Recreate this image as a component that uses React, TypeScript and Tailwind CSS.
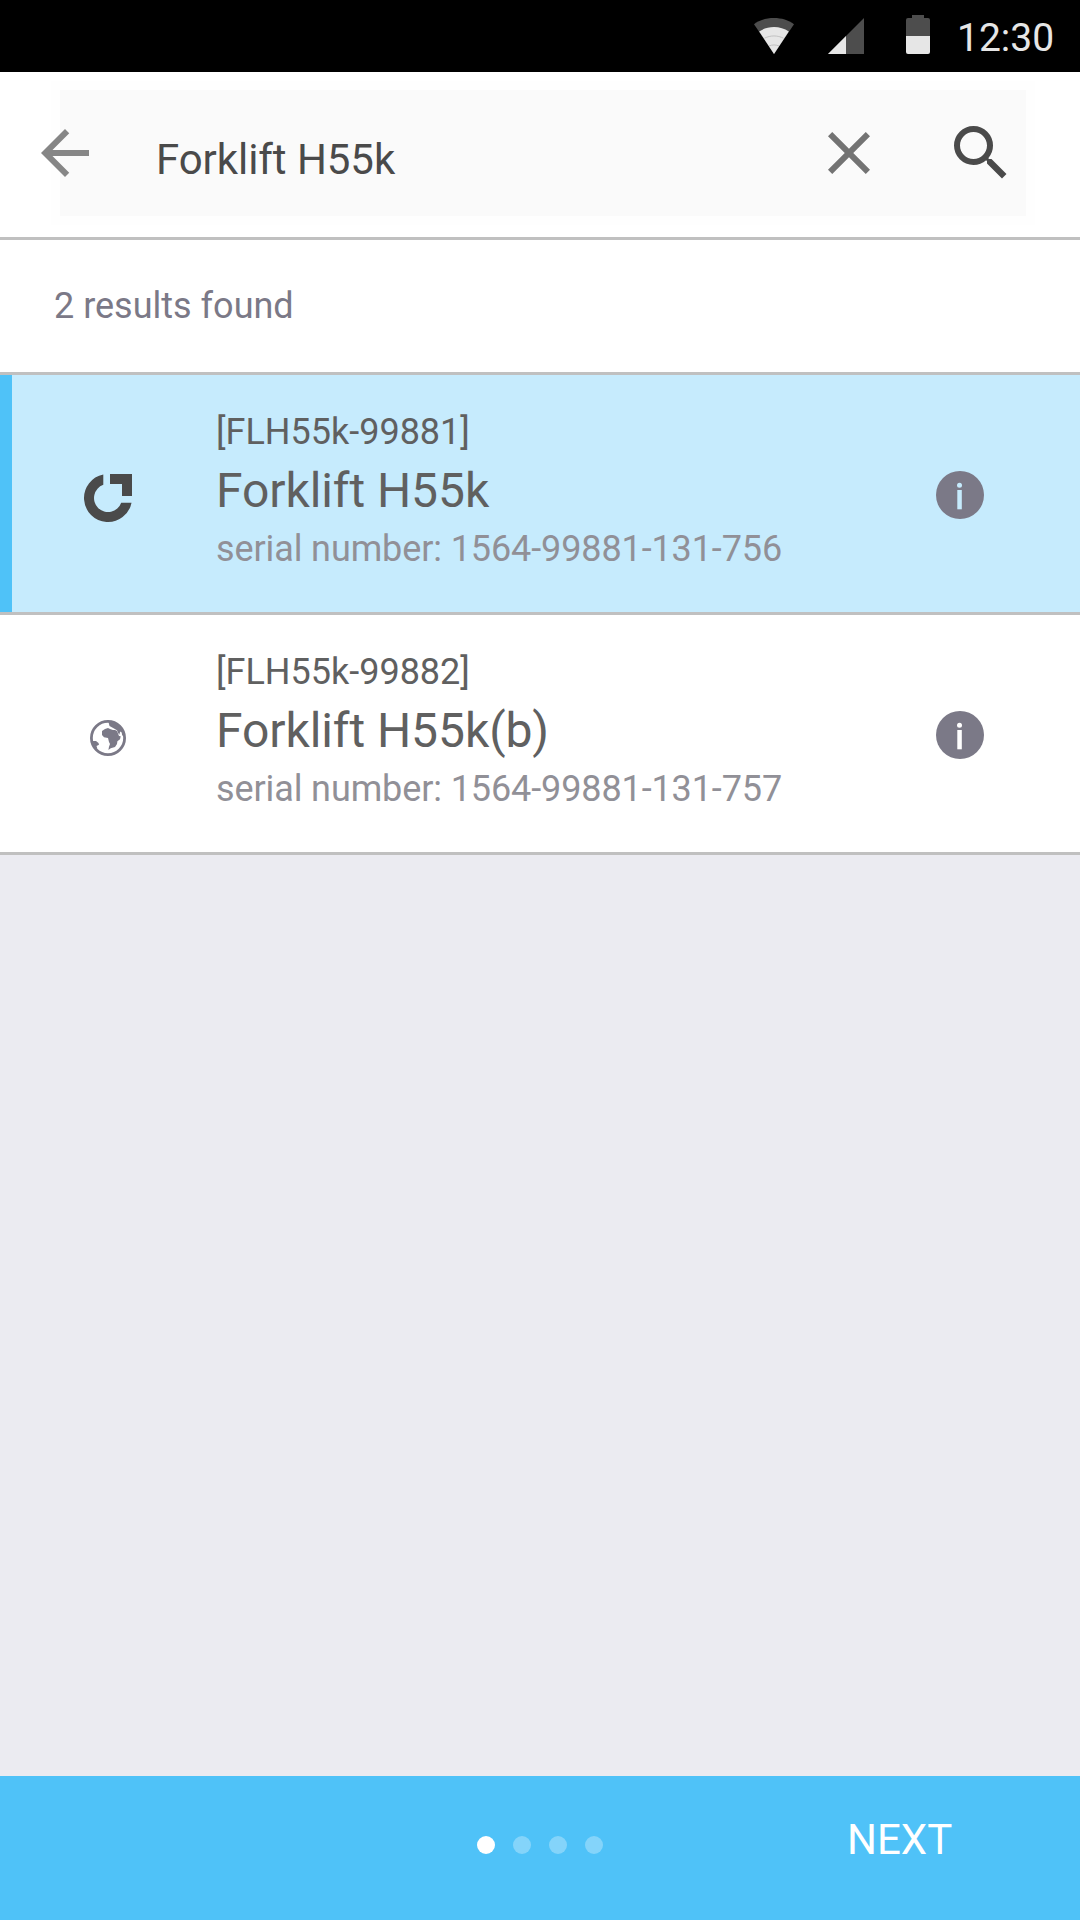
type Result = { code: string; name: string; serial: string; selected: boolean };

const results: Result[] = [
  { code: '[FLH55k-99881]', name: 'Forklift H55k', serial: '1564-99881-131-756', selected: true },
  { code: '[FLH55k-99882]', name: 'Forklift H55k(b)', serial: '1564-99881-131-757', selected: false },
];

function StatusBar() {
  return (
    <div className="flex h-[72px] items-start bg-black pl-[754px] text-[#e6e6e6]">
      <svg className="mt-[15px] h-[39px] w-[40px]" viewBox="0 0 40 39">
        <path d="M0 9.200C5.500 5 12.500 3 20 3s14.500 2 20 6.200L20 39z" fill="#4d4d4d" />
        <path d="M5.200 16.500C9.500 13.500 14.500 12 20 12s10.500 1.500 14.800 4.500L20 39z" fill="#e6e6e6" />
        <path d="M10.500 23.200c6-3 13-3 19 0M15 31c3-1.400 7-1.400 10 0" fill="none" stroke="#b8b8b8" strokeWidth=".8" />
      </svg>
      <svg className="mt-[18px] ml-[34px] h-[36px] w-[36px]" viewBox="0 0 36 36">
        <path d="M36 0v36H0z" fill="#4d4d4d" />
        <path d="M18 18v18H0z" fill="#e6e6e6" />
      </svg>
      <svg className="mt-[15px] ml-[42px] h-[39px] w-[24px]" viewBox="0 0 24 39">
        <path d="M6 0h12v3h4a2 2 0 0 1 2 2v16H0V5a2 2 0 0 1 2-2h4z" fill="#4d4d4d" />
        <path d="M0 21h24v16a2 2 0 0 1-2 2H2a2 2 0 0 1-2-2z" fill="#e6e6e6" />
      </svg>
      <span className="mt-[15px] ml-[27px] text-[39px] leading-[46px]">12:30</span>
    </div>
  );
}

function SearchBar() {
  return (
    <div className="flex h-[168px] border-b-[3px] border-[#c0c0c0] bg-white pt-[18px] pl-[60px]">
      <div className="flex h-[126px] w-[966px] shrink-0 items-start bg-[#fafafa] pt-[27px] ring-[9px] ring-[#fefefe]">
        <svg className="-ml-[31px] h-[72px] w-[72px] shrink-0" viewBox="0 0 24 24" fill="#868686">
          <path d="M20 11H7.830l5.590-5.590L12 4l-8 8 8 8 1.410-1.410L7.830 13H20z" />
        </svg>
        <span className="mt-[18px] ml-[55px] w-[657px] text-[42px] leading-[49px] tracking-[-0.06px] text-[#4a4a4a]">Forklift H55k</span>
        <svg className="h-[72px] w-[72px] shrink-0" viewBox="0 0 24 24" fill="#737373">
          <path d="M19 6.410L17.590 5 12 10.590 6.410 5 5 6.410 10.590 12 5 17.590 6.410 19 12 13.410 17.590 19 19 17.590 13.410 12z" />
        </svg>
        <svg className="ml-[60px] h-[72px] w-[72px] shrink-0" viewBox="0 0 24 24" fill="#4a4a4a">
          <path d="M15.500 14h-.79l-.28-.27A6.471 6.471 0 0 0 16 9.500 6.500 6.500 0 1 0 9.500 16c1.610 0 3.090-.59 4.230-1.570l.27.28v.79l5 4.990L20.490 19zm-6 0C7.010 14 5 11.990 5 9.500S7.010 5 9.500 5 14 7.010 14 9.500 11.990 14 9.500 14z" />
        </svg>
      </div>
    </div>
  );
}

function TargetIcon() {
  return (
    <svg className="h-[48px] w-[48px]" viewBox="0 0 48 48" fill="#4a4a4a">
      <path d="M19.300 .46A24 24 0 1 0 47.540 28.700H37.200A14 14 0 1 1 19.300 10.800z" />
      <path d="M26 0h22v22H38V10H26z" />
    </svg>
  );
}

function GlobeIcon() {
  return (
    <svg className="h-[36px] w-[36px]" viewBox="0 0 36 36" fill="#7b7987">
      <circle cx="18" cy="18" r="16.600" fill="none" stroke="#7b7987" strokeWidth="2.800" />
      <path d="M12 11l3-2 3-1 2 1 3 1h2l2 1 2 5 1.700.3-.7 3-2.600 2-.4 2.700-2 3-4.300 1.300-2.300 1.700.6-3.300 1-2.700-1-2-1-4-4-.7-2-2.300z" />
      <path d="M18.500 2l1 4 4.500 2.400 3 1.800 1 2.500 1.300 2 .9-3.200 1.500 1 .5 3 2 .5-1-5-4-6-5-3z" />
      <path d="M1.500 21H6l2.500 2 .5 1.700L6.500 26l.8 2.500-3 .5z" />
    </svg>
  );
}

function InfoIcon() {
  return (
    <svg className="h-[48px] w-[48px]" viewBox="0 0 48 48">
      <circle cx="24" cy="24" r="24" fill="#7b7987" />
      <circle cx="23.500" cy="14.300" r="2.500" className="fill-current" />
      <rect x="21.300" y="19" width="4.500" height="19.300" className="fill-current" />
    </svg>
  );
}

function ResultRow({ item }: { item: Result }) {
  return (
    <div className="h-[240px] border-b-[3px] border-[#c0c0c0]">
      <div className={item.selected ? 'flex h-full bg-[#c6ebfd] text-[#c6ebfd]' : 'flex h-full bg-white text-white'}>
        <div className={item.selected ? 'w-[12px] bg-[#4fc2f8]' : 'w-[12px]'} />
        <div className="flex w-[192px] items-start justify-center">
          <div className={item.selected ? 'mt-[99px]' : 'mt-[105px]'}>{item.selected ? <TargetIcon /> : <GlobeIcon />}</div>
        </div>
        <div className="w-[732px] pt-[36px] pl-[12px] text-[#606060]">
          <div className="text-[36px] leading-[42px]">{item.code}</div>
          <div className="mt-[10px] text-[48px] leading-[56px] tracking-[-0.08px]">{item.name}</div>
          <div className="mt-[9px] text-[36px] leading-[42px] tracking-[-0.11px] text-[#919097]">serial number: {item.serial}</div>
        </div>
        <div className="pt-[96px]">
          <InfoIcon />
        </div>
      </div>
    </div>
  );
}

function Footer() {
  return (
    <div className="grid h-[144px] grid-cols-3 bg-[#4fc2f8] text-white">
      <div />
      <div className="flex justify-center gap-[18px] pt-[60px]">
        <span className="size-[18px] rounded-full bg-white" />
        <span className="size-[18px] rounded-full bg-white/30" />
        <span className="size-[18px] rounded-full bg-white/30" />
        <span className="size-[18px] rounded-full bg-white/30" />
      </div>
      <div className="flex pt-[39px] pl-[127px] text-[42px] leading-[49px]">NEXT</div>
    </div>
  );
}

export default function App() {
  return (
    <div className="flex h-[1920px] w-[1080px] flex-col overflow-hidden bg-[#ebebf1] font-['Roboto',sans-serif]">
      <StatusBar />
      <SearchBar />
      <div className="h-[135px] border-b-[3px] border-[#c0c0c0] bg-white pt-[45px] pl-[54px] text-[36px] leading-[42px] text-[#7b7987]">
        2 results found
      </div>
      {results.map((item) => (
        <ResultRow key={item.code} item={item} />
      ))}
      <div className="grow" />
      <Footer />
    </div>
  );
}
